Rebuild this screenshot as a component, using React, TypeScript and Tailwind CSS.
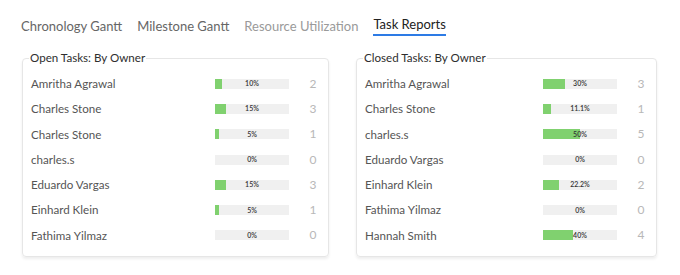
import React from "react";

type Row = { name: string; pct: number; label: string; count: number };

const openRows: Row[] = [
  { name: "Amritha Agrawal", pct: 10, label: "10%", count: 2 },
  { name: "Charles Stone", pct: 15, label: "15%", count: 3 },
  { name: "Charles Stone", pct: 5, label: "5%", count: 1 },
  { name: "charles.s", pct: 0, label: "0%", count: 0 },
  { name: "Eduardo Vargas", pct: 15, label: "15%", count: 3 },
  { name: "Einhard Klein", pct: 5, label: "5%", count: 1 },
  { name: "Fathima Yilmaz", pct: 0, label: "0%", count: 0 },
];

const closedRows: Row[] = [
  { name: "Amritha Agrawal", pct: 30, label: "30%", count: 3 },
  { name: "Charles Stone", pct: 11.1, label: "11.1%", count: 1 },
  { name: "charles.s", pct: 50, label: "50%", count: 5 },
  { name: "Eduardo Vargas", pct: 0, label: "0%", count: 0 },
  { name: "Einhard Klein", pct: 22.2, label: "22.2%", count: 2 },
  { name: "Fathima Yilmaz", pct: 0, label: "0%", count: 0 },
  { name: "Hannah Smith", pct: 40, label: "40%", count: 4 },
];

function Card({ title, rows, width }: { title: string; rows: Row[]; width: string }) {
  return (
    <fieldset
      className={`${width} rounded-[4px] border border-[#e6e6e6] pl-[8px] pr-0 pt-0 pb-[8px] shadow-[0_2px_3px_rgba(0,0,0,0.07)]`}
    >
      <legend className="ml-[-2px] px-[1px] text-[11.6px] leading-[16px] text-[#2e2e2e]">{title}</legend>
      <div className="flex flex-col pt-[5px]">
        {rows.map((r, i) => (
          <div key={i} className="flex h-[25.3px] items-center">
            <div className="flex-1 text-[11.6px] text-[#555]">{r.name}</div>
            <div className="relative h-[10px] w-[74px] bg-[#f0f0f0]">
              <div
                className="absolute left-0 top-0 h-full bg-[#80d16f]"
                style={{ width: `${r.pct}%` }}
              />
              <div className="absolute inset-0 flex items-center justify-center text-[7px] font-semibold leading-none text-[#333]">
                {r.label}
              </div>
            </div>
            <div className="w-[39px] pl-[9px] text-center text-[12px] text-[#b8b8b8]">{r.count}</div>
          </div>
        ))}
      </div>
    </fieldset>
  );
}

export default function App() {
  return (
    <div
      className="h-[275px] w-[680px] bg-white"
      style={{ fontFamily: "Lato, 'Open Sans', sans-serif" }}
    >
      <div className="flex items-end gap-[15px] pl-[21px] pt-[14px] text-[13px] leading-[20px]">
        <div className="text-[#666]">Chronology Gantt</div>
        <div className="text-[#666]">Milestone Gantt</div>
        <div className="text-[#9a9a9a]">Resource Utilization</div>
        <div className="border-b-2 border-[#2d7be5] text-[#222]">Task Reports</div>
      </div>
      <div className="mt-[14px] flex items-start gap-[27px] pl-[22px]">
        <Card title="Open Tasks: By Owner" rows={openRows} width="w-[307px]" />
        <Card title="Closed Tasks: By Owner" rows={closedRows} width="w-[301px]" />
      </div>
    </div>
  );
}
